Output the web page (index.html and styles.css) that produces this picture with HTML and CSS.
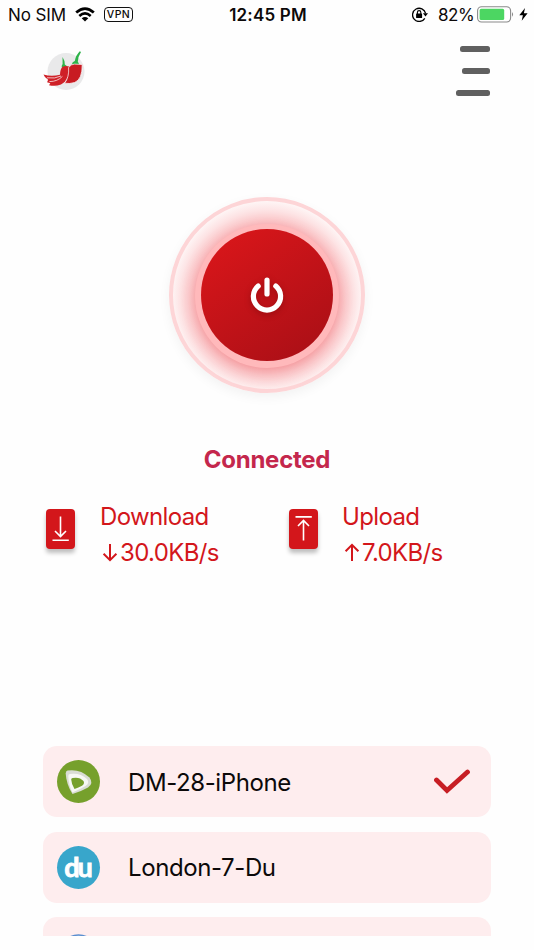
FILE: index.html
```
<!DOCTYPE html>
<html lang="en">
<head>
    <meta charset="UTF-8">
    <meta name="viewport" content="width=device-width, initial-scale=1.0">
    <title>VPN</title>
    <link rel="stylesheet" href="styles.css">
</head>
<body>
    <div class="screen">
        <!-- Status bar -->
        <div class="status-bar">
            <div class="status-left">
                <span class="carrier">No SIM</span>
                <svg class="wifi" width="20" height="15" viewBox="0 0 20 15">
                    <path d="M1.2 5.6 Q10 -2.4 18.8 5.6" fill="none" stroke="#000" stroke-width="2.7"/>
                    <path d="M4.3 9 Q10 3.8 15.7 9" fill="none" stroke="#000" stroke-width="2.6"/>
                    <path d="M6.7 11.3 Q10 8.5 13.3 11.3 L10 14.6 Z" fill="#000"/>
                </svg>
                <span class="vpn-badge">VPN</span>
            </div>
            <span class="time">12:45 PM</span>
            <div class="status-right">
                <svg class="lock" width="16" height="15" viewBox="0 0 16 15">
                    <path d="M12.8 11.3 A6.6 6.6 0 1 1 13.6 6.4" fill="none" stroke="#000" stroke-width="1.3"/>
                    <path d="M10.9 6.3 H16 L13.5 9.6 Z" fill="#000"/>
                    <rect x="4.1" y="6.4" width="6" height="4.7" rx="0.6" fill="#000"/>
                    <path d="M5.4 7 V5.3 a1.7 1.7 0 0 1 3.4 0 V7" fill="none" stroke="#000" stroke-width="1.1"/>
                </svg>
                <span class="percent">82%</span>
                <svg class="battery" width="38" height="17" viewBox="0 0 38 17">
                    <rect x="0.6" y="0.8" width="33" height="15.2" rx="4" fill="#fff" stroke="#8a8a8a" stroke-width="1.1"/>
                    <rect x="2.6" y="2.8" width="24.6" height="11.2" rx="1.6" fill="#4cd662"/>
                    <path d="M35 6 q2.2 2.4 0 4.8 Z" fill="#8a8a8a"/>
                </svg>
                <svg class="bolt" width="9" height="13" viewBox="0 0 9 13">
                    <path d="M6 0 L0.3 7.2 H3.9 L2.7 12.8 L8.6 5.3 H4.9 Z" fill="#000"/>
                </svg>
            </div>
        </div>

        <!-- Header -->
        <div class="header">
            <svg class="logo" width="44" height="42" viewBox="0 0 44 42">
                <circle cx="23" cy="21.5" r="18.5" fill="#e9e9ea"/>
                <path d="M19.5 7 q2.4 3.5 2.3 7.5 l2.4 1.8 l-5.2 1.6 q-1-1.9 0.6-3.8 Z" fill="#2eb34a"/>
                <path d="M38 2 q-3 4.6-3.2 9.6 l1.6 3.2 l-7.6-0.3 q0.4-2.6 3-3.4 q0.8-5.6 5-9.8 Z" fill="#2eb34a"/>
                <path d="M0.5 24.5 q8 2.6 16.5 0.2 q0.2-6 2.6-8 q3.2-1.2 7.4 0 q-0.8 14-9 17.8 q-6 2.3-12 0.7 l1.3-2 l-3.2-1 l1-2.5 q-3.6-2-4.6-5.2 Z" fill="#cf2027"/>
                <path d="M4 27.8 q8 1.2 14-1.8 M6.4 31.6 q8 0 13-5.2" fill="none" stroke="#fff" stroke-width="0.7"/>
                <path d="M25.6 17.5 q2.5-3.4 6-3.4 l7.6 0.4 q0.2 15-7.6 18 q-5.2 1.7-10 0.7 q4.7-6 4-15.7 Z" fill="#c81b22" stroke="#fff" stroke-width="0.7"/>
            </svg>
            <div class="menu">
                <span class="bar bar-mid"></span>
                <span class="bar bar-short"></span>
                <span class="bar bar-long"></span>
            </div>
        </div>

        <!-- Power button -->
        <div class="power-ring">
            <div class="power-button">
                <svg width="36" height="40" viewBox="0 0 36 40">
                    <path d="M9.2 11.1 A13.6 13.6 0 1 0 26.8 11.1" fill="none" stroke="#fff" stroke-width="5.2" stroke-linecap="round"/>
                    <path d="M18 5 V19" stroke="#fff" stroke-width="5.2" stroke-linecap="round"/>
                </svg>
            </div>
        </div>
        <div class="state">Connected</div>

        <!-- Speeds -->
        <div class="speeds">
            <div class="speed">
                <div class="speed-icon">
                    <svg width="29" height="39" viewBox="0 0 29 39">
                        <path d="M14.5 7.5 V27 M9 22 L14.5 27.5 L20 22 M6.5 31.3 H22.8" fill="none" stroke="#fff" stroke-width="1.6"/>
                    </svg>
                </div>
                <div class="speed-text">
                    <div class="speed-label">Download</div>
                    <div class="speed-value">
                        <svg width="16" height="19" viewBox="0 0 16 19"><path d="M8 1 V17 M1.6 10.8 L8 17.2 L14.4 10.8" fill="none" stroke="#d3161b" stroke-width="2"/></svg>
                        <span>30.0KB/s</span>
                    </div>
                </div>
            </div>
            <div class="speed">
                <div class="speed-icon">
                    <svg width="29" height="39" viewBox="0 0 29 39">
                        <path d="M14.5 31.5 V12 M9 17 L14.5 11.5 L20 17 M6.5 7.9 H22.8" fill="none" stroke="#fff" stroke-width="1.6"/>
                    </svg>
                </div>
                <div class="speed-text upload">
                    <div class="speed-label">Upload</div>
                    <div class="speed-value">
                        <svg width="16" height="19" viewBox="0 0 16 19"><path d="M8 18 V2 M1.6 8.2 L8 1.8 L14.4 8.2" fill="none" stroke="#d3161b" stroke-width="2"/></svg>
                        <span>7.0KB/s</span>
                    </div>
                </div>
            </div>
        </div>

        <!-- Server list -->
        <div class="servers">
            <div class="server">
                <svg class="server-icon" width="43" height="43" viewBox="0 0 43 43">
                    <circle cx="21.5" cy="21.5" r="21.5" fill="#76a02c"/>
                    <path d="M10.5 10.5 Q23 8.5 32.5 17.5 Q37 23.500 31 27.5 Q24 31.5 15.5 34 Q9.5 25 8.7 13.5 Q8.7 10.8 10.5 10.5 Z" fill="#d9dcd4"/>
                    <path d="M13 14 Q23 12.5 30 19 Q33 23 28.5 26 Q22.5 29.5 15.500 32.5 Q11.5 25 11.300 16 Q11.300 14.2 13 14 Z" fill="#f7f8f4"/>
                    <path d="M15.6 18 Q22.500 16.5 26.5 21 Q28 23.800 25 25.800 Q21.5 27.8 17.5 29 Q14.400 24 14.200 19.5 Q14.200 18.2 15.6 18 Z" fill="#76a02c"/>
                </svg>
                <span class="server-name">DM-28-iPhone</span>
                <svg class="check" width="36" height="26" viewBox="0 0 36 26">
                    <path d="M2.5 11 L13 21.5 L33.5 3" fill="none" stroke="#c71e24" stroke-width="4.8" stroke-linecap="round"/>
                </svg>
            </div>
            <div class="server">
                <div class="server-icon du">du</div>
                <span class="server-name">London-7-Du</span>
            </div>
            <div class="server">
                <svg class="server-icon" width="43" height="43" viewBox="0 0 43 43">
                    <circle cx="21.5" cy="22.5" r="18.5" fill="#d9ecfa" stroke="#5b8fd0" stroke-width="1.6"/>
                </svg>
            </div>
        </div>
    </div>
</body>
</html>
```
FILE: styles.css
```
* {
    box-sizing: border-box;
}

body {
    margin: 0;
    background-color: #fefefe;
    font-family: Inter, "Liberation Sans", sans-serif;
    color: #0c0909;
}

.screen {
    width: 534px;
    height: 950px;
    overflow: hidden;
}

svg {
    display: block;
    flex-shrink: 0;
}

/* Status bar */
.status-bar {
    display: grid;
    grid-template-columns: 1fr auto 1fr;
    align-items: center;
    height: 29px;
    padding: 0 6px 0 8px;
    font-size: 17px;
    white-space: nowrap;
}

.status-left,
.status-right {
    display: flex;
    align-items: center;
}

.status-right {
    justify-content: flex-end;
}

.carrier {
    width: 67px;
    letter-spacing: -0.1px;
}

.vpn-badge {
    width: 29px;
    height: 15px;
    margin-left: 9px;
    border: 1.5px solid #111;
    border-radius: 4px;
    font-size: 10.5px;
    font-weight: 500;
    line-height: 13px;
    text-align: center;
    letter-spacing: 0.5px;
}

.time {
    font-weight: 600;
    letter-spacing: 0.2px;
}

.percent {
    width: 39px;
    margin-left: 10px;
    letter-spacing: -0.5px;
}

.bolt {
    margin-left: 4px;
}

/* Header */
.header {
    display: flex;
    justify-content: space-between;
    height: 168px;
    padding: 16px 44px 0 43px;
}

.logo {
    margin-top: 5px;
}

.menu {
    display: flex;
    flex-direction: column;
    align-items: flex-end;
    gap: 15.5px;
    padding-top: 0.5px;
}

.bar {
    height: 6.5px;
    border-radius: 2.5px;
    background-color: #606060;
}

.bar-mid {
    width: 30px;
}

.bar-short {
    width: 28px;
}

.bar-long {
    width: 34px;
}

/* Power button */
.power-ring {
    display: flex;
    align-items: center;
    justify-content: center;
    width: 196px;
    height: 196px;
    margin: 0 auto;
    border: 4px solid #fdd5d7;
    border-radius: 50%;
    background: radial-gradient(circle at 50% 51%, #f9b3b6 0, #f9b3b6 70px, #fbcdcf 78px, #fde4e5 87px, #fef6f6 96px);
    box-shadow: 0 4px 12px rgba(0, 0, 0, 0.05);
}

.power-button {
    display: flex;
    align-items: center;
    justify-content: center;
    width: 132px;
    height: 132px;
    border-radius: 50%;
    background: linear-gradient(145deg, #d8161a 10%, #a90f16 95%);
    box-shadow: 0 1px 0 6px #ffb9bb, 0 8px 20px 4px rgba(225, 30, 40, 0.2);
}

.power-button svg {
    filter: drop-shadow(0 2px 3px rgba(70, 0, 0, 0.3));
}

.state {
    margin-top: 52px;
    font-size: 24px;
    font-weight: 700;
    line-height: 30px;
    text-align: center;
    letter-spacing: -0.25px;
    color: #c4274c;
}

/* Speeds */
.speeds {
    display: grid;
    grid-template-columns: 243px 1fr;
    margin-top: 24px;
    padding-left: 46px;
}

.speed {
    display: flex;
    height: 72px;
    color: #d3161b;
}

.speed-icon {
    width: 29px;
    height: 40px;
    margin-top: 10px;
    border-radius: 4px;
    background-color: #d3161b;
    box-shadow: 0 4px 4px rgba(0, 0, 0, 0.25);
}

.speed-text {
    margin-left: 25px;
    font-size: 24px;
    line-height: 35px;
    letter-spacing: -0.65px;
    white-space: nowrap;
}

.upload {
    margin-left: 24px;
}

.speed-value {
    display: flex;
    align-items: center;
    gap: 2px;
    margin: 1px 0 0 2px;
}

/* Server list */
.servers {
    display: flex;
    flex-direction: column;
    gap: 14.5px;
    height: 190px;
    margin: 175px 43px 0;
    overflow: hidden;
}

.server {
    display: flex;
    flex-shrink: 0;
    align-items: center;
    height: 71px;
    padding: 0 21px 0 14px;
    border-radius: 14px;
    background-color: #feedee;
}

.server-name {
    margin-left: 28px;
    padding-top: 1px;
    font-size: 24px;
    letter-spacing: -0.4px;
}

.check {
    margin-left: auto;
}

.du {
    width: 43px;
    height: 43px;
    border-radius: 50%;
    background-color: #38a6cb;
    color: #fff;
    font-family: Lato, Inter, sans-serif;
    font-size: 27px;
    font-weight: 700;
    line-height: 41px;
    text-align: center;
    letter-spacing: -2px;
    text-indent: -2px;
    -webkit-text-stroke: 0.8px #fff;
}
```
